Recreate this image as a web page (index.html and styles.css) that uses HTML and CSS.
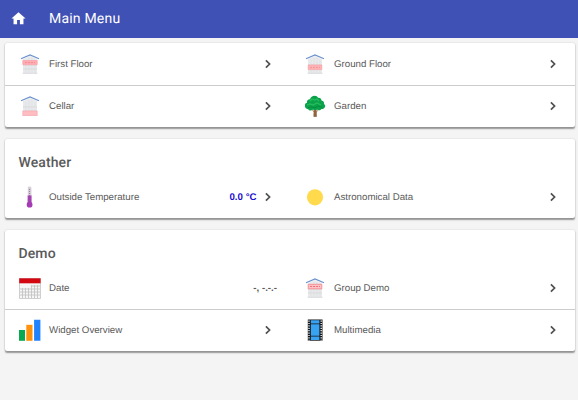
FILE: index.html
```
<!DOCTYPE html>
<html lang="en">
<head>
<meta charset="utf-8">
<title>Main Menu</title>
<link rel="stylesheet" href="styles.css">
</head>
<body>
<svg class="defs" width="0" height="0">
  <symbol id="chevron" viewBox="0 0 8 10"><path d="M1.900 1.300 5.600 5 1.900 8.700" fill="none" stroke="#505050" stroke-width="1.700"/></symbol>
  <symbol id="house" viewBox="0 0 22 22">
    <path d="M4 6 11 3l7 3v14.500H4z" fill="#e9eaec"/>
    <path d="M4 12h14M4 16h14M3.500 20.300h15" stroke="#d0d2d5" stroke-width=".7"/>
    <path d="M7 7v13M10 5v15M13 5v15M16 7v13" stroke="#dcdee2" stroke-width=".7"/>
    <path d="M2 5.800 11 1.900l9 3.900" fill="none" stroke="#6a91cd" stroke-width="1.100"/>
  </symbol>
</svg>
<header class="bar">
  <svg class="home" viewBox="0 0 24 24"><path d="M10 20v-6h4v6h5v-8h3L12 3 2 12h3v8z" fill="#fff"/></svg>
  <h1>Main Menu</h1>
</header>
<main>
  <section class="card">
    <div class="row">
      <div class="item"><svg class="icon" viewBox="0 0 22 22"><use href="#house"/><path d="M3.800 7.500h14.400v4.200H3.800z" fill="#ffacb2" stroke="#f9a0a7" stroke-width=".7"/><path d="M6 9.600h10" stroke="#f48e98" stroke-dasharray="2 1"/></svg><span class="label">First Floor</span><svg class="chev"><use href="#chevron"/></svg></div>
      <div class="item"><svg class="icon" viewBox="0 0 22 22"><use href="#house"/><path d="M4.200 12h13.600v4.600H4.200z" fill="#ffb3b5" stroke="#f9a5a9" stroke-width=".7"/><path d="M6 14.400h10" stroke="#f2949a" stroke-dasharray="2 1"/></svg><span class="label">Ground Floor</span><svg class="chev"><use href="#chevron"/></svg></div>
    </div>
    <div class="row">
      <div class="item"><svg class="icon" viewBox="0 0 22 22"><use href="#house"/><path d="M3.800 16h14.400v4.400H3.800z" fill="#ffbdc2" stroke="#f9abb2" stroke-width=".7"/></svg><span class="label">Cellar</span><svg class="chev"><use href="#chevron"/></svg></div>
      <div class="item"><svg class="icon" viewBox="0 0 22 22"><path d="M10.200 12h1.800l.5 9.500h-2.700zM11 18l-3.500-4M11.500 18l3.500-4" fill="#92643d" stroke="#92643d" stroke-width=".7"/><path d="M10.500.8c2 0 3 .8 3.500 2 2-.3 3.500.8 3.500 2.800 2 .4 3 1.800 2.400 3.400 1.600.8 1.800 2.600.6 3.700-.8.9-2 1.600-3 1.200-.9 1.500-3 1.600-4.500.7-1.500.8-3 .6-4-.1-1.500 1.400-4 1.300-4.800-.3C2 14.200.6 12.500 1 10.300c-.2-1.400 1-2.200 2-2.500C2.700 5.600 4 4.200 6 4.300 6.500 2 8.500.8 10.500.8z" fill="#0aa34b"/><path d="M6 6l2-2 3 1 2-1 2 2M3 10l3-1 3 1 4-2 4 2" fill="none" stroke="#27bd5b" stroke-width="1.300"/><path d="M4 12.500l4-.6 3 1 3-2 4 1.500" fill="none" stroke="#07863c" stroke-width=".8"/></svg><span class="label">Garden</span><svg class="chev"><use href="#chevron"/></svg></div>
    </div>
  </section>
  <section class="card">
    <h2>Weather</h2>
    <div class="row">
      <div class="item"><svg class="icon" viewBox="0 0 22 22"><path d="M8.800 10V1.700q0-1.200 1.800-1.200t1.800 1.200V10z" fill="#d5d0d7"/><path d="M8.600 9.500h4V17h-4z" fill="#a646b5"/><circle cx="10.600" cy="18.700" r="2.900" fill="#a53ab5"/><path d="M10.600 3v14" stroke="#8b4a96" stroke-width=".7" stroke-dasharray="1 1"/></svg><span class="label">Outside Temperature</span><span class="value blue">0.0 °C</span><svg class="chev"><use href="#chevron"/></svg></div>
      <div class="item"><svg class="icon" viewBox="0 0 22 22"><circle cx="11" cy="11.300" r="8.100" fill="#ffda4c"/></svg><span class="label">Astronomical Data</span><svg class="chev"><use href="#chevron"/></svg></div>
    </div>
  </section>
  <section class="card">
    <h2>Demo</h2>
    <div class="row">
      <div class="item"><svg class="icon" viewBox="0 0 22 22"><path d="M.5 1.500h21v20H.5z" fill="#f6f6f6" stroke="#bbb" stroke-width=".7"/><path d="M12.500 9H21M1 12h20M1 15h20M1 18h20M3.500 11v10M6.500 11v10M9.500 11v10M12.500 8v13M15.500 8v13M18.500 8v13" stroke="#c4c4c4" stroke-width=".9"/><path d="M.2 1.300h21.400v5H.2z" fill="#d20710"/></svg><span class="label">Date</span><span class="value last">-, -.-.-</span></div>
      <div class="item"><svg class="icon" viewBox="0 0 22 22"><use href="#house"/><path d="M4.200 7.300h13.600v4.500H4.200z" fill="#ffc3c6" stroke="#f58a91" stroke-width=".9"/><path d="M6 9.500h10" stroke="#ee717b" stroke-dasharray="2 1"/></svg><span class="label">Group Demo</span><svg class="chev"><use href="#chevron"/></svg></div>
    </div>
    <div class="row">
      <div class="item"><svg class="icon" viewBox="0 0 22 22"><path d="M0 11h6v10.800H0z" fill="#09a951"/><path d="M7.300 5.800h6.200v16H7.300z" fill="#ff920d"/><path d="M15.100.7h6.300v21.100h-6.300z" fill="#2082fc"/></svg><span class="label">Widget Overview</span><svg class="chev"><use href="#chevron"/></svg></div>
      <div class="item"><svg class="icon" viewBox="0 0 22 22"><path d="M3.800.500h14.700v21.200H3.800z" fill="#151515"/><path d="M6.800 1.200h8.600v3.400H6.800zM6.800 5.300h8.600v11.500H6.800zM6.800 17.600h8.600V21H6.800z" fill="#38a2f3"/><path d="M5 1.500v20M17.200 1.500v20" stroke="#fff" stroke-width="1.300" stroke-dasharray="1.200 1.200"/></svg><span class="label">Multimedia</span><svg class="chev"><use href="#chevron"/></svg></div>
    </div>
  </section>
</main>
</body>
</html>
```
FILE: styles.css
```
* { box-sizing: border-box; }
body {
  margin: 0;
  min-height: 400px;
  background: #f4f4f4;
  color: #5a5a5a;
  font: 9.7px "Liberation Sans", Arial, sans-serif;
  text-rendering: geometricPrecision;
}
.defs { display: block; }
.bar {
  height: 38px;
  display: flex;
  align-items: center;
  padding: 0 10px 2px;
  background: #3f51b5;
  color: #fff;
}
.home { width: 17px; height: 17px; margin-right: 22px; }
h1 { margin: 0; padding-top: 2px; font: 400 14px Roboto, sans-serif; letter-spacing: .2px; }
main {
  display: flex;
  flex-direction: column;
  gap: 12px;
  padding: 4.500px 3px 0 4.500px;
}
.card {
  background: #fff;
  border-radius: 2px;
  box-shadow: 0 1.500px 1.500px rgba(0, 0, 0, .38), 0 0 2px rgba(0, 0, 0, .12);
}
h2 {
  height: 37px;
  margin: 0;
  padding: 11px 14px 0;
  font: 500 14px/26px Roboto, sans-serif;
  letter-spacing: .1px;
}
.row {
  height: 42px;
  display: grid;
  grid-template-columns: 285px 285px;
}
.row + .row { border-top: 1px solid #ccc; }
.item {
  display: flex;
  align-items: center;
  padding: 0 17.500px 0 14px;
}
.icon { width: 22px; height: 22px; margin-right: 8.500px; flex: none; }
.label { flex: 1; white-space: nowrap; }
.label, .value { padding-top: 1.200px; }
.chev { width: 8px; height: 10px; }
.value { margin-right: 7.500px; font-weight: 700; }
.value.blue { color: #1a10d0; }
.value.last { margin-right: -5px; }
```
